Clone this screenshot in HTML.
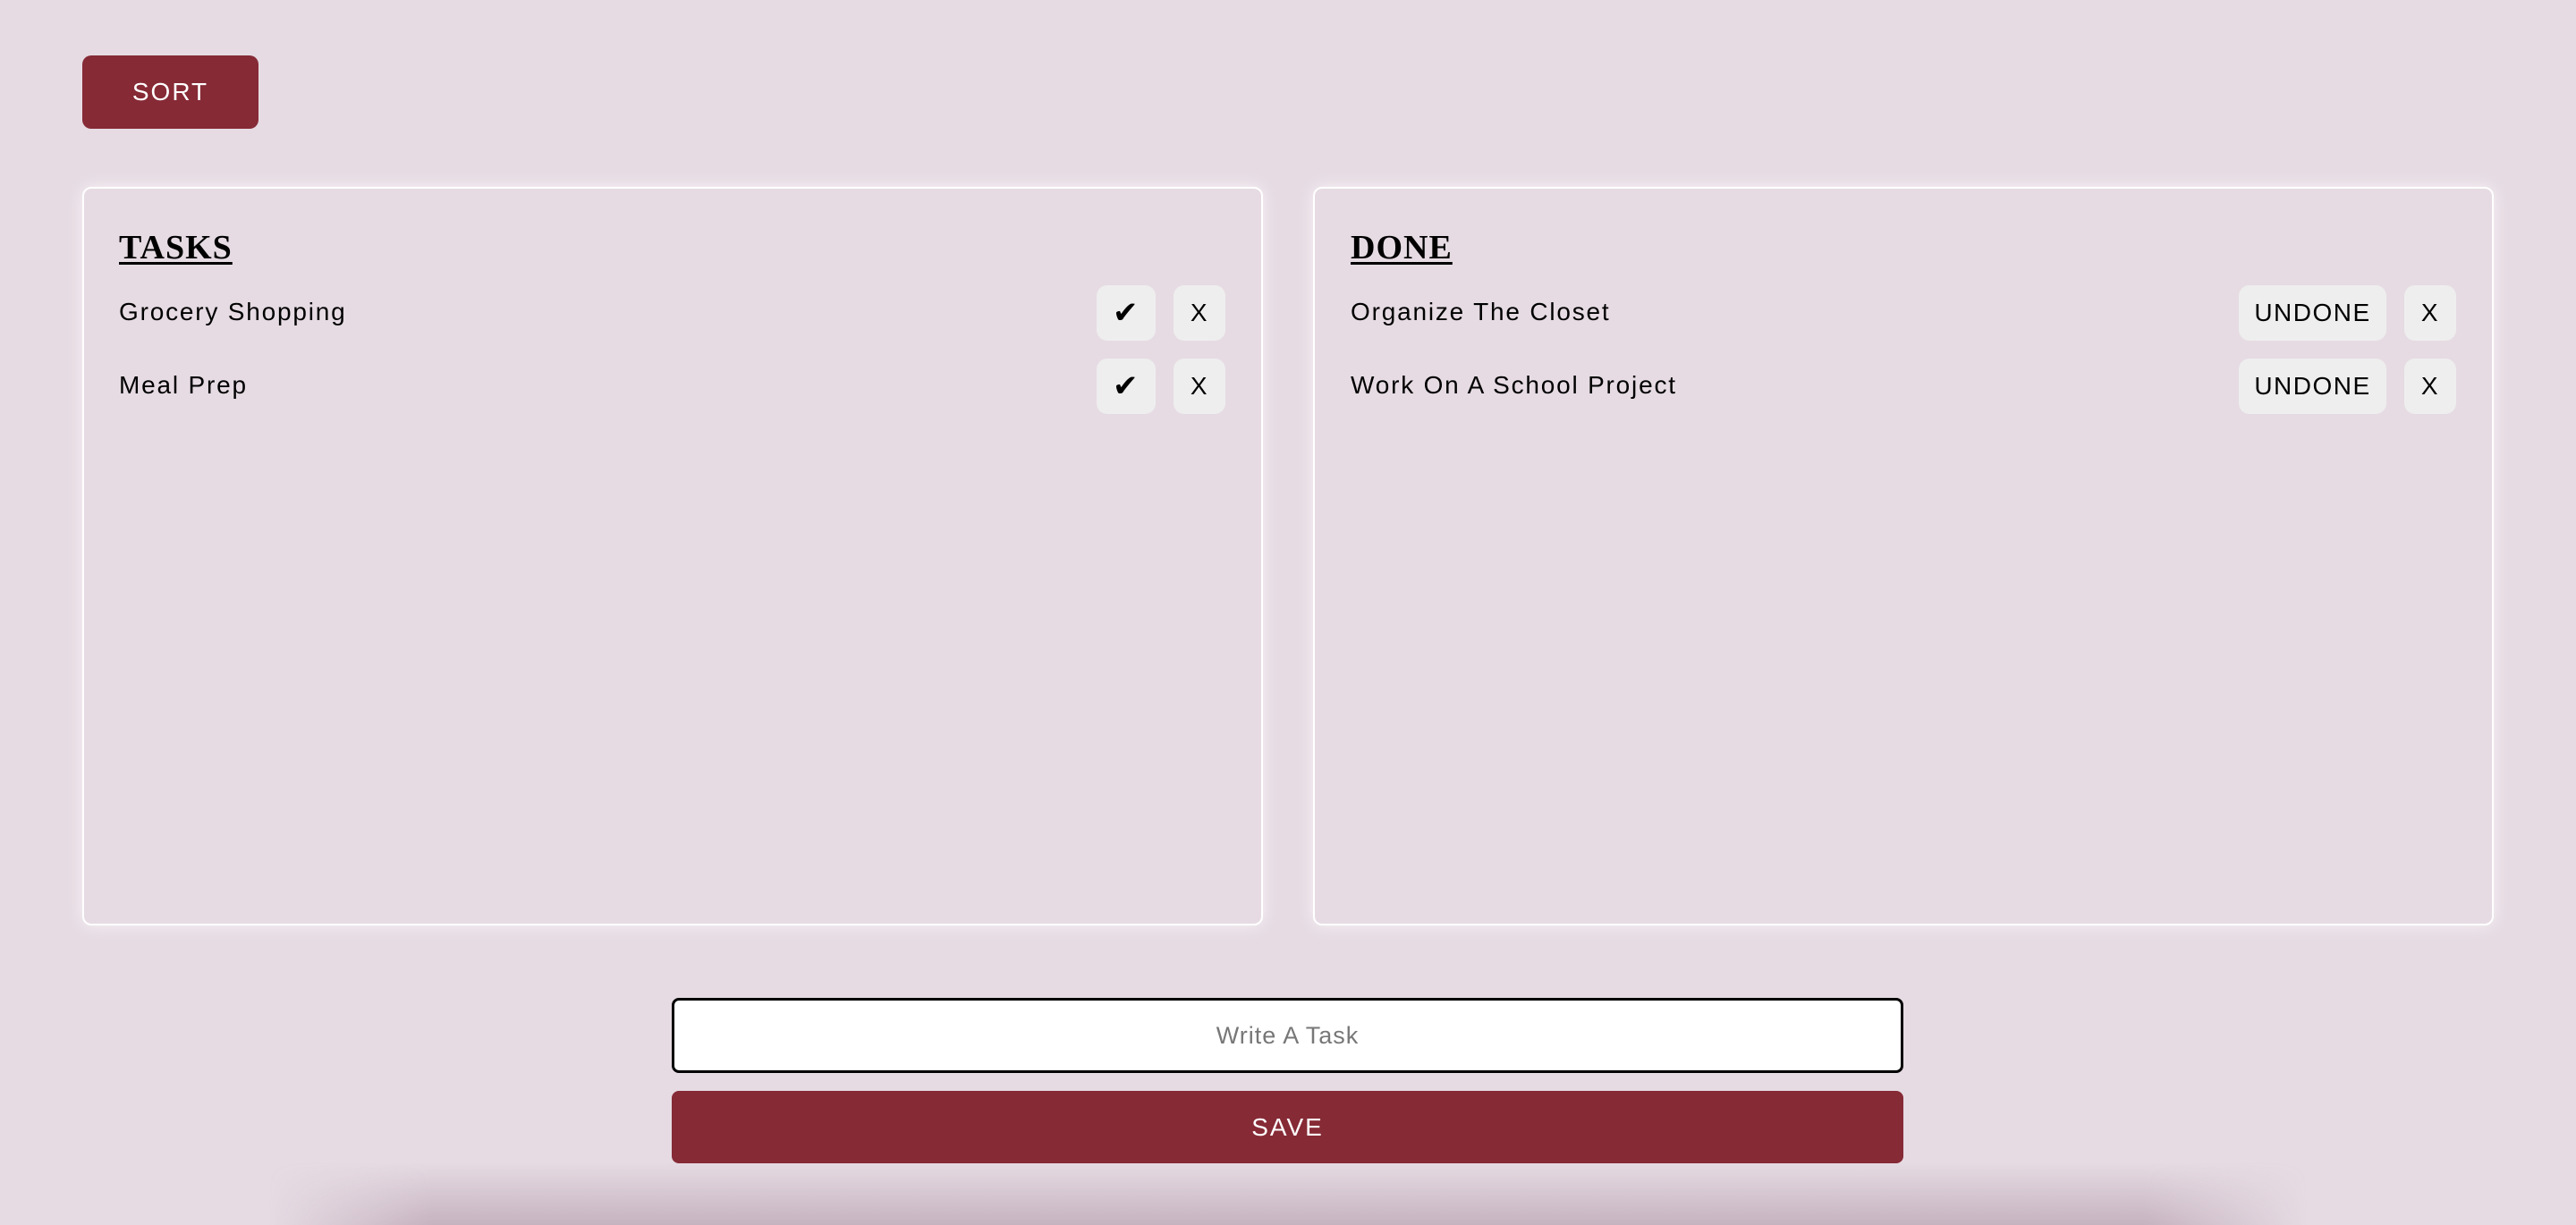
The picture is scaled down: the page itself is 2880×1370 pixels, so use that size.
<!DOCTYPE html>
<html><head><meta charset="utf-8"><style>
*{margin:0;padding:0;box-sizing:border-box}
html,body{width:2880px;height:1370px;overflow:hidden;background:#e6dbe3;font-family:"Liberation Sans",sans-serif}
#wrap{position:relative;width:2880px;height:1370px;overflow:hidden}
.abs{position:absolute}
.sort{left:92px;top:62px;width:197px;height:82px;background:#862a36;border-radius:10px;color:#fff;font-size:28px;letter-spacing:2px;display:flex;align-items:center;justify-content:center}
.panel{top:209px;height:826px;border:2px solid #fff;border-radius:10px;box-shadow:0 0 18px rgba(255,255,255,.7)}
.title{font-family:"Liberation Serif",serif;font-weight:bold;font-size:38px;text-decoration:underline;text-decoration-thickness:3px;text-underline-offset:4px;color:#000;letter-spacing:1px}
.item{font-size:28px;letter-spacing:1.8px;color:#000}
.btn{background:#eeeeee;border-radius:12px;height:62px;display:flex;align-items:center;justify-content:center;font-size:28px;color:#000;letter-spacing:1.5px}
.input{left:751px;top:1116px;width:1377px;height:84px;background:#fff;border:3px solid #000;border-radius:8px;display:flex;align-items:center;justify-content:center;color:#777;font-size:27px;letter-spacing:1px}
.save{left:751px;top:1220px;width:1377px;height:81px;background:#862a36;border-radius:8px;color:#fff;font-size:28px;letter-spacing:2px;display:flex;align-items:center;justify-content:center}
.shadow{left:300px;top:1300px;width:2280px;height:70px;background:linear-gradient(to bottom,rgba(150,120,140,0),rgba(150,120,140,.4));-webkit-mask-image:linear-gradient(to right,transparent,#000 8%,#000 92%,transparent);mask-image:linear-gradient(to right,transparent,#000 8%,#000 92%,transparent)}
</style></head><body><div id="wrap">
<div class="abs sort">SORT</div>
<div class="abs panel" style="left:92px;width:1320px"></div>
<div class="abs panel" style="left:1468px;width:1320px"></div>
<div class="abs title" style="left:133px;top:255px">TASKS</div>
<div class="abs title" style="left:1510px;top:255px">DONE</div>
<div class="abs item" style="left:133px;top:333px">Grocery Shopping</div>
<div class="abs item" style="left:133px;top:415px">Meal Prep</div>
<div class="abs item" style="left:1510px;top:333px">Organize The Closet</div>
<div class="abs item" style="left:1510px;top:415px">Work On A School Project</div>
<div class="abs btn" style="left:1226px;top:319px;width:66px;font-size:34px">✔</div>
<div class="abs btn" style="left:1312px;top:319px;width:58px">X</div>
<div class="abs btn" style="left:1226px;top:401px;width:66px;font-size:34px">✔</div>
<div class="abs btn" style="left:1312px;top:401px;width:58px">X</div>
<div class="abs btn" style="left:2503px;top:319px;width:165px">UNDONE</div>
<div class="abs btn" style="left:2688px;top:319px;width:58px">X</div>
<div class="abs btn" style="left:2503px;top:401px;width:165px">UNDONE</div>
<div class="abs btn" style="left:2688px;top:401px;width:58px">X</div>
<div class="abs input">Write A Task</div>
<div class="abs save">SAVE</div>
<div class="abs shadow"></div>
</div></body></html>
